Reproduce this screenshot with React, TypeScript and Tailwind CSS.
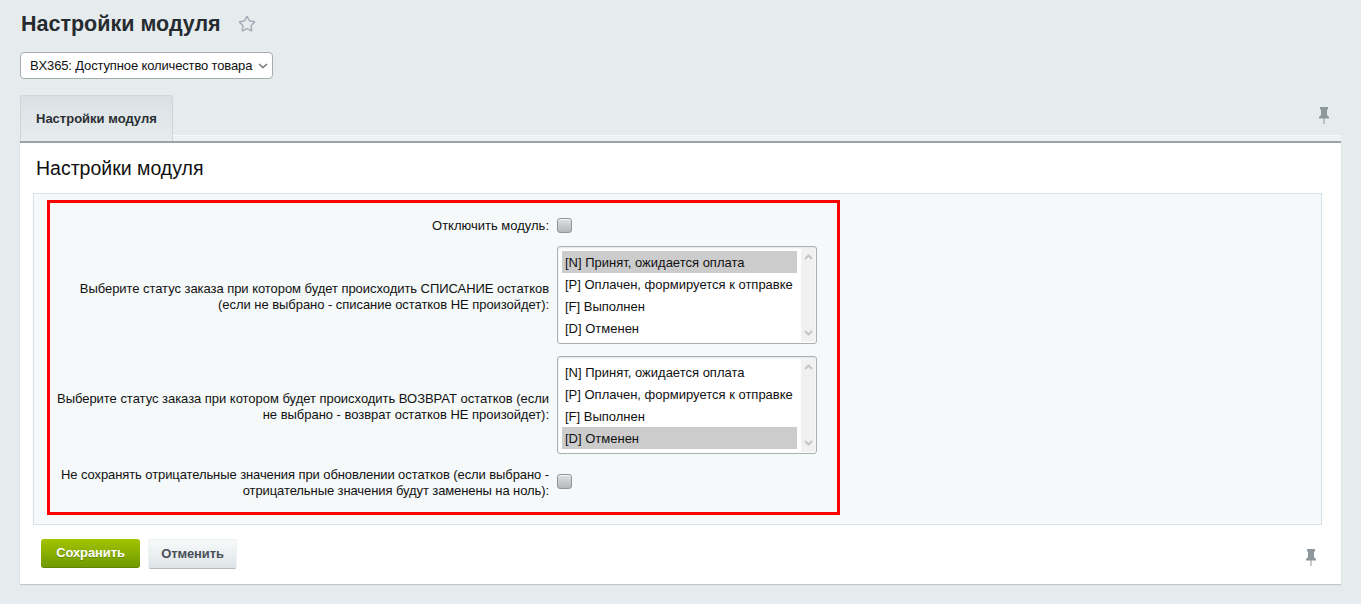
import { Star } from "lucide-react";

const STATUSES = [
  "[N] Принят, ожидается оплата",
  "[P] Оплачен, формируется к отправке",
  "[F] Выполнен",
  "[D] Отменен",
];

function Pin({ className }: { className: string }) {
  return (
    <svg className={className} width="12" height="17" viewBox="0 0 12 17" fill="none">
      <path d="M2 0h8v2L9 3v5l2 2v1.500H1V10l2-2V3L2 2z" fill="#8e979b" />
      <path d="M6 11v6" stroke="#8e979b" strokeWidth="1" />
    </svg>
  );
}

function Checkbox() {
  return (
    <div className="w-[15px] h-[15px] rounded-[3px] border border-[#8f9699] bg-gradient-to-b from-[#dfe1e3] to-[#b4b8bb] shadow-[inset_0_1px_0_#f3f4f5]" />
  );
}

function Listbox({ selected }: { selected: number }) {
  return (
    <div className="w-[260px] h-[98px] flex bg-white border border-[#a9afb3] rounded-[3px] shadow-[inset_0_1px_2px_rgba(0,0,0,0.12)]">
      <div className="w-[243px] pl-[4px] pt-[4px]">
        {STATUSES.map((status, i) => (
          <div
            key={status}
            className={`w-[235px] h-[22px] pl-[3px] leading-[24px] whitespace-nowrap text-[13px] text-[#111111] ${i === selected ? "bg-[#cccccc]" : ""}`}
          >
            {status}
          </div>
        ))}
      </div>
      <div className="flex-1 my-px mr-px bg-[#f1f1f1] flex flex-col items-center justify-between py-[6px] rounded-r-[2px]">
        <svg width="9" height="6" viewBox="0 0 9 6" fill="none">
          <path d="M1 5l3.500-3.500L8 5" stroke="#c3c6c8" strokeWidth="2" />
        </svg>
        <svg width="9" height="6" viewBox="0 0 9 6" fill="none">
          <path d="M1 1l3.500 3.500L8 1" stroke="#c3c6c8" strokeWidth="2" />
        </svg>
      </div>
    </div>
  );
}

export default function App() {
  return (
    <div className="min-h-screen bg-[#e6ecee] pl-[20px] pr-[20px] pt-[12px] pb-[20px] font-['Liberation_Sans',Arial,sans-serif]">
      {/* Title */}
      <div className="flex items-center h-[24px] pl-px">
        <h1 className="text-[21.500px] leading-[24px] font-bold text-[#262b30]">Настройки модуля</h1>
        <Star className="ml-[17px] text-[#a4aeba]" size={18} strokeWidth={2} />
      </div>

      {/* Module select */}
      <div className="mt-[16px] w-[253px] h-[27px] flex items-center justify-between bg-white border border-[#a5acaf] rounded-[4px] pl-[9px] pr-[4px] text-[13px] tracking-[-0.14px] text-[#111111]">
        <span className="whitespace-nowrap">BX365: Доступное количество товара</span>
        <svg width="10" height="6" viewBox="0 0 10 6" fill="none">
          <path d="M1 1l4 3.500L9 1" stroke="#6f7578" strokeWidth="1.500" />
        </svg>
      </div>

      {/* Tab strip */}
      <div className="mt-[16px] h-[46px] flex items-end">
        <div className="w-[153px] h-[46px] flex items-center pl-[15px] bg-gradient-to-b from-[#dae1e4] to-[#e7ecee] border border-b-0 border-[#cfd6da] rounded-t-[3px] text-[13px] font-bold text-[#2b2f33]">
          Настройки модуля
        </div>
        <div className="relative flex-1 h-[6px] bg-[#eef1f2] border-t border-[#f6f8f8]">
          <Pin className="absolute right-[11px] bottom-[17px]" />
        </div>
      </div>

      {/* Panel */}
      <div className="relative h-[443px] bg-white border-t-2 border-[#9aa3a7] shadow-[0_1px_1px_rgba(120,135,140,0.35)]">
        <div className="pl-[16px] pt-[13px] h-[50px] text-[19.500px] leading-[24px] text-[#111111]">Настройки модуля</div>

        <div className="ml-[13px] mr-[19px] h-[332px] bg-[#f5f9f9] border border-[#d7e0e6] pt-[6px] pl-[13px]">
          <div className="w-[793px] h-[315px] border-[3px] border-[#ff0000] text-[13px] text-[#111111]">
            <div className="flex items-start h-[43px] pt-[15px]">
              <div className="w-[499px] text-right leading-[15px]">Отключить модуль:</div>
              <div className="ml-[8px]">
                <Checkbox />
              </div>
            </div>

            <div className="flex items-center">
              <div className="w-[499px] pt-[4px] text-right leading-[16px] tracking-[-0.05px]">
                Выберите статус заказа при котором будет происходить СПИСАНИЕ остатков
                <br />
                (если не выбрано - списание остатков НЕ произойдет):
              </div>
              <div className="ml-[8px]">
                <Listbox selected={0} />
              </div>
            </div>

            <div className="flex items-center mt-[12px]">
              <div className="w-[499px] pt-[4px] text-right leading-[16px] tracking-[-0.03px]">
                Выберите статус заказа при котором будет происходить ВОЗВРАТ остатков (если
                <br />
                не выбрано - возврат остатков НЕ произойдет):
              </div>
              <div className="ml-[8px]">
                <Listbox selected={3} />
              </div>
            </div>

            <div className="flex items-start mt-[12px]">
              <div className="w-[499px] pt-px text-right leading-[16px] tracking-[-0.09px]">
                Не сохранять отрицательные значения при обновлении остатков (если выбрано -
                <br />
                отрицательные значения будут заменены на ноль):
              </div>
              <div className="ml-[8px] mt-[8px]">
                <Checkbox />
              </div>
            </div>
          </div>
        </div>

        {/* Footer buttons */}
        <div className="flex items-start pl-[21px] pt-[14px]">
          <button className="w-[99px] h-[29px] rounded-[3px] bg-gradient-to-b from-[#a3c400] to-[#6f9a00] border-b border-[#5f8500] text-[13px] font-bold tracking-[-0.1px] text-white [text-shadow:0_1px_0_rgba(60,80,0,0.4)]">
            Сохранить
          </button>
          <button className="ml-[8px] w-[89px] h-[30px] rounded-[3px] bg-gradient-to-b from-[#f8fafa] to-[#dfe5e8] border border-[#eef1f2] border-b-[#b4b9bc] text-[13px] font-bold tracking-[-0.1px] text-[#4a5059]">
            Отменить
          </button>
          <Pin className="absolute right-[24px] bottom-[18px]" />
        </div>
      </div>
    </div>
  );
}
